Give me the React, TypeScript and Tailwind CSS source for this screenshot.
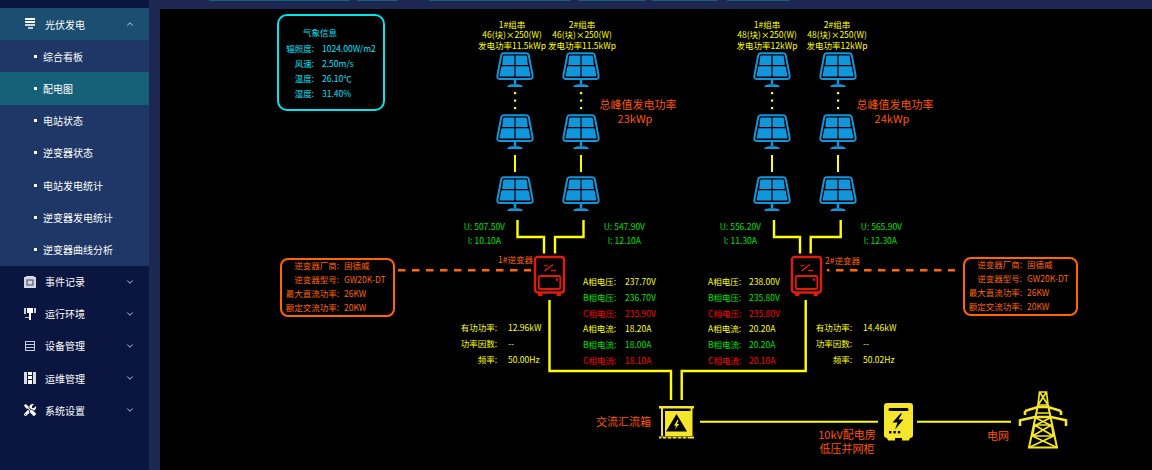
import { ChevronDown, ChevronUp } from "lucide-react";
import { FaTools } from "react-icons/fa";
import type { ReactNode } from "react";

const YELLOW = "#ffff00";
const ORANGE = "#ff6600";
const CABINET = "#f5e62b";
const RED = "#e01c08";
const BLUE = "#1296db";

const SUB_ITEMS = ["综合看板", "配电图", "电站状态", "逆变器状态", "电站发电统计", "逆变器发电统计", "逆变器曲线分析"];

function StackIcon() {
  return (
    <svg width="12" height="12" viewBox="0 0 12 12" fill="white">
      <rect x="1" y="0" width="10" height="2" />
      <rect x="1" y="3" width="10" height="2" />
      <rect x="1" y="6" width="10" height="2" opacity="0.8" />
      <rect x="4" y="9" width="5" height="2" opacity="0.7" />
    </svg>
  );
}

function RecordIcon() {
  return (
    <svg width="12" height="12" viewBox="0 0 12 12">
      <path d="M0 1h2V0h8v1h2v11H0z" fill="#d5d8e2" />
      <rect x="3" y="4" width="6" height="5" fill="none" stroke="#3a4468" />
    </svg>
  );
}

function EnvIcon() {
  return (
    <svg width="12" height="12" viewBox="0 0 12 12" fill="white">
      <rect x="0" y="0" width="2" height="6" opacity="0.8" />
      <rect x="3" y="0" width="6" height="5" />
      <rect x="10" y="0" width="2" height="5" opacity="0.8" />
      <rect x="5" y="5" width="2" height="7" />
      <rect x="1" y="9" width="4" height="1" opacity="0.7" />
    </svg>
  );
}

function DeviceIcon() {
  return (
    <svg width="12" height="12" viewBox="0 0 12 12" fill="#c9cdda">
      <rect x="1" y="1" width="10" height="1" />
      <rect x="1" y="4" width="10" height="1" />
      <rect x="1" y="7" width="10" height="1" />
      <rect x="1" y="10" width="10" height="1" />
      <rect x="1" y="1" width="1" height="10" />
      <rect x="10" y="1" width="1" height="10" />
    </svg>
  );
}

function OpsIcon() {
  return (
    <svg width="12" height="12" viewBox="0 0 12 12" fill="white">
      <rect x="0" y="0" width="3" height="12" opacity="0.85" />
      <rect x="4" y="0" width="4" height="3" />
      <rect x="4" y="4" width="4" height="3" />
      <rect x="4" y="8" width="4" height="4" />
      <rect x="9" y="0" width="3" height="12" opacity="0.85" />
    </svg>
  );
}

function MenuRow({ icon, label, open = false }: { icon: ReactNode; label: string; open?: boolean }) {
  return (
    <div className={`flex h-[32.2px] items-center pl-[24px] pr-[14px] text-[10px] text-white ${open ? "bg-[#1b4e70]" : ""}`}>
      <span className="flex w-[21px] shrink-0">{icon}</span>
      <span className="flex-1">{label}</span>
      {open ? <ChevronUp size={10} color="#dfe6f0" /> : <ChevronDown size={10} color="#dfe6f0" />}
    </div>
  );
}

function Sidebar() {
  return (
    <aside className="w-[149px] shrink-0 bg-[#0b1640] pt-[8px]">
      <MenuRow icon={<StackIcon />} label="光伏发电" open />
      <ul className="bg-[#1e3766]">
        {SUB_ITEMS.map((item) => (
          <li
            key={item}
            className={`flex h-[32.2px] items-center gap-[6px] pl-[34px] text-[10px] text-white ${item === "配电图" ? "bg-[#176079]" : ""}`}
          >
            <span className="h-[3px] w-[3px] bg-white" />
            {item}
          </li>
        ))}
      </ul>
      <MenuRow icon={<RecordIcon />} label="事件记录" />
      <MenuRow icon={<EnvIcon />} label="运行环境" />
      <MenuRow icon={<DeviceIcon />} label="设备管理" />
      <MenuRow icon={<OpsIcon />} label="运维管理" />
      <MenuRow icon={<FaTools size={12} color="white" />} label="系统设置" />
    </aside>
  );
}

// x and y are page coordinates, the canvas starts at 160,9
function pos(x: number, y: number) {
  return { left: x - 160, top: y - 9 };
}

const ALIGN = {
  left: "-translate-y-1/2",
  right: "-translate-x-full -translate-y-1/2",
  center: "-translate-x-1/2 -translate-y-1/2",
};

function Label({
  x,
  y,
  color,
  align = "left",
  big = false,
  children,
}: {
  x: number;
  y: number;
  color: string;
  align?: "left" | "right" | "center";
  big?: boolean;
  children: ReactNode;
}) {
  return (
    <span
      className={`absolute whitespace-nowrap leading-none ${big ? "text-[11px]" : "text-[8.5px]"} ${ALIGN[align]}`}
      style={{ ...pos(x, y), color }}
    >
      {children}
    </span>
  );
}

function SolarPanel({ x, y }: { x: number; y: number }) {
  return (
    <svg className="absolute" style={pos(x - 19, y)} width="38" height="35" viewBox="0 0 38 35">
      <path
        d="M8 1.2H30Q32.3 1.2 32.8 3.4L36.6 23.5Q37.2 27 33.6 27H4.4Q.8 27 1.4 23.5L5.2 3.4Q5.7 1.2 8 1.2Z"
        fill="none"
        stroke={BLUE}
        strokeWidth="2"
      />
      <path d="M8.2 3.6H18.4V13H6.6Q6 13 6.2 12L7.2 4.6Q7.4 3.6 8.2 3.6Z" fill={BLUE} />
      <path d="M19.6 3.6H29.8Q30.6 3.6 30.8 4.6L31.8 12Q32 13 31.4 13H19.6Z" fill={BLUE} />
      <path d="M6.2 14.2H18.4V24.6H4.2Q3.4 24.6 3.6 23.6L5.2 15.2Q5.4 14.2 6.2 14.2Z" fill={BLUE} />
      <path d="M19.6 14.2H31.8Q32.6 14.2 32.8 15.2L34.4 23.6Q34.6 24.6 33.8 24.6H19.6Z" fill={BLUE} />
      <rect x="17.8" y="27" width="2.4" height="5" fill={BLUE} />
      <path d="M11 35Q12 32.2 17 32.2H21Q26 32.2 27 35Z" fill={BLUE} />
    </svg>
  );
}

function Inverter({ x }: { x: number }) {
  return (
    <svg className="absolute" style={pos(x, 255)} width="33" height="42" viewBox="0 0 33 42">
      <rect x="2" y="2" width="29" height="35.5" rx="2.5" fill="none" stroke={RED} strokeWidth="2.4" />
      <rect x="5.8" y="21" width="21.5" height="13" rx="1.5" fill="none" stroke={RED} strokeWidth="1.8" />
      <rect x="23" y="23.5" width="2.2" height="2.2" fill={RED} />
      <path d="M11.5 16L20 9.5" stroke={RED} strokeWidth="1.5" />
      <path d="M11 11Q12.5 9.5 14.5 11" fill="none" stroke={RED} strokeWidth="1.2" />
      <path d="M18 15.5H23" stroke={RED} strokeWidth="1.4" />
      <path d="M5 38H9.5V40Q9.5 41.2 7.2 41.2Q5 41.2 5 40ZM23.5 38H28V40Q28 41.2 25.7 41.2Q23.5 41.2 23.5 40Z" fill={RED} />
    </svg>
  );
}

function Wires() {
  const dots = [515, 581, 772, 838].flatMap((x) => [93, 100.5, 108].map((y) => ({ x, y })));
  return (
    <svg className="absolute inset-0" width="992" height="461" viewBox="160 9 992 461" fill="none">
      {dots.map((d) => (
        <rect key={`${d.x}-${d.y}`} x={d.x - 1} y={d.y - 1} width="2.2" height="2.2" fill={YELLOW} />
      ))}
      <g stroke={YELLOW} strokeWidth="2">
        <path d="M515 155V172M581 155V172M772 155V172M838 155V172" />
        <path d="M700 421.7H878M917 421.7H1011" />
      </g>
      <g stroke={YELLOW} strokeWidth="2.4">
        <path d="M517.5 220V237H544V253.5" />
        <path d="M583.5 220V237H555V253.5" />
        <path d="M774 220V237H800V253.5" />
        <path d="M840.7 220V237H810.7V253.5" />
        <path d="M549.5 300V371H671V400" />
        <path d="M805.7 300V371H681.7V400" />
      </g>
      <g stroke={ORANGE} strokeWidth="2.4" strokeDasharray="7.5 6.5">
        <path d="M398 270.3H531" />
        <path d="M827 270.3H955" strokeDashoffset="5" />
      </g>
    </svg>
  );
}

function CombinerBox() {
  return (
    <svg className="absolute" style={pos(659, 406)} width="36" height="33" viewBox="0 0 36 33">
      <rect x="0" y="0" width="35" height="2.5" fill={CABINET} />
      <rect x="2" y="2" width="2" height="28" fill={CABINET} />
      <rect x="31.5" y="2" width="2" height="28" fill={CABINET} />
      <rect x="6" y="5" width="26" height="25" fill={CABINET} />
      <path d="M17.5 8L28 25.5H7Z" fill="black" />
      <path d="M18.3 14L15 19.8H17.2L16 23.2L20.3 18H18L19.6 14Z" fill={CABINET} />
      <path d="M0 30.5H35V32.5H0Z" fill={CABINET} />
      <path d="M3 31V33M8 31V33M13 31V33M18 31V33M23 31V33M28 31V33" stroke="black" strokeWidth="1.2" />
    </svg>
  );
}

function DistributionCabinet() {
  return (
    <svg className="absolute" style={pos(884, 403)} width="30" height="39" viewBox="0 0 30 39">
      <rect x="0" y="0" width="29" height="35" rx="3" fill={CABINET} />
      <path d="M3 35H11V37.5H4ZM18 35H26L25 37.5H18Z" fill={CABINET} />
      <rect x="4.5" y="5" width="20" height="3" rx="1.5" fill="black" />
      <path d="M16.5 10.5L8.5 19.5H13.5L11 26.5L19.5 16.5H14.5L18 10.5Z" fill="black" />
      <rect x="5" y="28" width="2.4" height="2.4" fill="black" />
      <rect x="9.4" y="28" width="2.4" height="2.4" fill="black" />
      <rect x="13.8" y="28" width="2.4" height="2.4" fill="black" />
    </svg>
  );
}

function Tower() {
  return (
    <svg
      className="absolute"
      style={pos(1018, 391)}
      width="50"
      height="58"
      viewBox="0 0 50 58"
      fill="none"
      stroke={CABINET}
      strokeWidth="1.7"
    >
      <path d="M21.5 1H28.5L30 14H20ZM21.5 1L30 14M28.5 1L20 14" />
      <path d="M20 14L11 56.5H39L30 14" strokeWidth="2" />
      <path d="M7 20L20 16H30L43 20" strokeWidth="2.4" />
      <path d="M7 20V24M43 20V24" strokeWidth="2.6" />
      <path d="M1 29.5L17 26H33L49 29.5" strokeWidth="2.4" />
      <path d="M2 29V35M48 29V35" strokeWidth="2.6" />
      <path d="M19 22H31M18 27L32 34M32 27L18 34" />
      <path d="M16.5 34H33.5L35.5 45H14.5ZM16.5 34L35.5 45M33.5 34L14.5 45" />
      <path d="M14.5 45L39 56.5M35.5 45L11 56.5" />
    </svg>
  );
}

function StringInfo({ x, name, spec, power }: { x: number; name: string; spec: string; power: string }) {
  return (
    <div
      className="absolute flex w-[90px] -translate-x-1/2 flex-col items-center text-[8.5px] leading-[10.4px] text-[#ffff00]"
      style={pos(x, 19)}
    >
      <span>{name}</span>
      <span>{spec}</span>
      <span>{power}</span>
    </div>
  );
}

function WeatherCard() {
  const rows = [
    ["辐照度:", "1024.00W/m2"],
    ["风速:", "2.50m/s"],
    ["温度:", "26.10℃"],
    ["湿度:", "31.40%"],
  ];
  return (
    <div className="absolute left-[117px] top-[5px] h-[97px] w-[108px] rounded-[10px] border-2 border-[#00e5ee] pt-[10px] text-[8.5px] text-[#00e5ff]">
      <div className="pl-[24px] leading-[12px]">气象信息</div>
      <div className="mt-[4px] flex flex-col gap-[3.2px]">
        {rows.map(([k, v]) => (
          <div key={k} className="flex h-[12px] items-center gap-[8px]">
            <span className="w-[35px] text-right">{k}</span>
            <span className="whitespace-nowrap">{v}</span>
          </div>
        ))}
      </div>
    </div>
  );
}

function InverterCard({ className }: { className: string }) {
  const rows = [
    ["逆变器厂商:", "固德威"],
    ["逆变器型号:", "GW20K-DT"],
    ["最大直流功率:", "26KW"],
    ["额定交流功率:", "20KW"],
  ];
  return (
    <div
      className={`absolute flex h-[59px] w-[115px] flex-col justify-center gap-[2px] rounded-[8px] border-2 border-[#ff6600] pb-[2px] text-[8.5px] text-[#ff6600] ${className}`}
    >
      {rows.map(([k, v]) => (
        <div key={k} className="flex h-[12px] items-center gap-[5px]">
          <span className="w-[57px] whitespace-nowrap text-right">{k}</span>
          <span className="whitespace-nowrap">{v}</span>
        </div>
      ))}
    </div>
  );
}

const PHASE_COLORS = [YELLOW, "#00e000", "#ff0000", YELLOW, "#00e000", "#ff0000"];
const PHASE_LABELS = ["A相电压:", "B相电压:", "C相电压:", "A相电流:", "B相电流:", "C相电流:"];
const PHASE_Y = [281, 296.5, 313, 328, 344, 360];

function PhaseTable({ x, valueX, values }: { x: number; valueX: number; values: string[] }) {
  return (
    <>
      {PHASE_LABELS.map((label, i) => (
        <Label key={label} x={x} y={PHASE_Y[i]} color={PHASE_COLORS[i]}>
          {label}
        </Label>
      ))}
      {values.map((v, i) => (
        <Label key={i} x={valueX} y={PHASE_Y[i]} color={PHASE_COLORS[i]}>
          {v}
        </Label>
      ))}
    </>
  );
}

function PowerTable({ labelX, valueX, values }: { labelX: number; valueX: number; values: string[] }) {
  const labels = ["有功功率:", "功率因数:", "频率:"];
  return (
    <>
      {labels.map((label, i) => (
        <Label key={label} x={labelX} y={327 + i * 16} color={YELLOW} align="right">
          {label}
        </Label>
      ))}
      {values.map((v, i) => (
        <Label key={i} x={valueX} y={327 + i * 16} color={YELLOW}>
          {v}
        </Label>
      ))}
    </>
  );
}

const PANEL_COLUMNS = [515, 581, 772, 838];
const PANEL_ROWS = [52, 114, 176];

const STRING_VALUES: [number, number, string, string][] = [
  [505, 501, "U: 507.50V", "I: 10.10A"],
  [645, 641, "U: 547.90V", "I: 12.10A"],
  [761, 757, "U: 556.20V", "I: 11.30A"],
  [902, 897, "U: 565.90V", "I: 12.30A"],
];

function Diagram() {
  return (
    <div className="relative flex-1 overflow-hidden bg-black">
      <Wires />
      <WeatherCard />

      <StringInfo x={512} name="1#组串" spec="46(块)×250(W)" power="发电功率11.5kWp" />
      <StringInfo x={582} name="2#组串" spec="46(块)×250(W)" power="发电功率11.5kWp" />
      <StringInfo x={767} name="1#组串" spec="48(块)×250(W)" power="发电功率12kWp" />
      <StringInfo x={837} name="2#组串" spec="48(块)×250(W)" power="发电功率12kWp" />

      {PANEL_COLUMNS.flatMap((x) => PANEL_ROWS.map((y) => <SolarPanel key={`${x}-${y}`} x={x} y={y} />))}

      <Label x={638} y={104} color="#ff5500" align="center" big>总峰值发电功率</Label>
      <Label x={635} y={118} color="#ff5500" align="center" big>23kWp</Label>
      <Label x={895} y={104} color="#ff5500" align="center" big>总峰值发电功率</Label>
      <Label x={892} y={118} color="#ff5500" align="center" big>24kWp</Label>

      {STRING_VALUES.map(([ux, ix, u, i]) => (
        <div key={u}>
          <Label x={ux} y={226} color="#00e000" align="right">{u}</Label>
          <Label x={ix} y={240} color="#00e000" align="right">{i}</Label>
        </div>
      ))}

      <InverterCard className="left-[120px] top-[249px]" />
      <InverterCard className="left-[803px] top-[248px]" />
      <Label x={533} y={259} color={ORANGE} align="right">1#逆变器</Label>
      <Label x={825} y={260} color={ORANGE}>2#逆变器</Label>
      <Inverter x={533} />
      <Inverter x={790} />

      <PowerTable labelX={497} valueX={508} values={["12.96kW", "--", "50.00Hz"]} />
      <PowerTable labelX={852} valueX={863} values={["14.46kW", "--", "50.02Hz"]} />
      <PhaseTable x={583} valueX={625} values={["237.70V", "236.70V", "235.90V", "18.20A", "18.00A", "18.10A"]} />
      <PhaseTable x={708} valueX={749} values={["238.00V", "235.80V", "235.80V", "20.20A", "20.20A", "20.10A"]} />

      <CombinerBox />
      <DistributionCabinet />
      <Tower />
      <Label x={651} y={421} color="#ff5500" align="right" big>交流汇流箱</Label>
      <Label x={847} y={434} color="#ff5500" align="center" big>10kV配电房</Label>
      <Label x={847} y={448} color="#ff5500" align="center" big>低压并网柜</Label>
      <Label x={987} y={435} color="#ff5500" big>电网</Label>
    </div>
  );
}

export default function App() {
  return (
    <div className="flex h-[470px] w-[1152px] overflow-hidden bg-[#1c2752] font-['Noto_Sans_CJK_SC','Noto_Sans',sans-serif]">
      <Sidebar />
      <div className="flex min-w-0 flex-1 flex-col">
        {/* bottom edge of the tab strip peeks out at the top */}
        <div className="flex h-[9px] pl-[60px]">
          <span className="h-px w-[141px] bg-[#176079]" />
          <span className="ml-[7px] h-px w-[41px] bg-[#176079]" />
          <span className="ml-[31px] h-px w-[141px] bg-[#176079]" />
          <span className="ml-[9px] h-px w-[66px] bg-[#176079]" />
          <span className="ml-[7px] h-px w-[65px] bg-[#176079]" />
          <span className="ml-[10px] h-px w-[62px] bg-[#176079]" />
        </div>
        <div className="flex flex-1 pl-[11px]">
          <Diagram />
        </div>
      </div>
    </div>
  );
}
